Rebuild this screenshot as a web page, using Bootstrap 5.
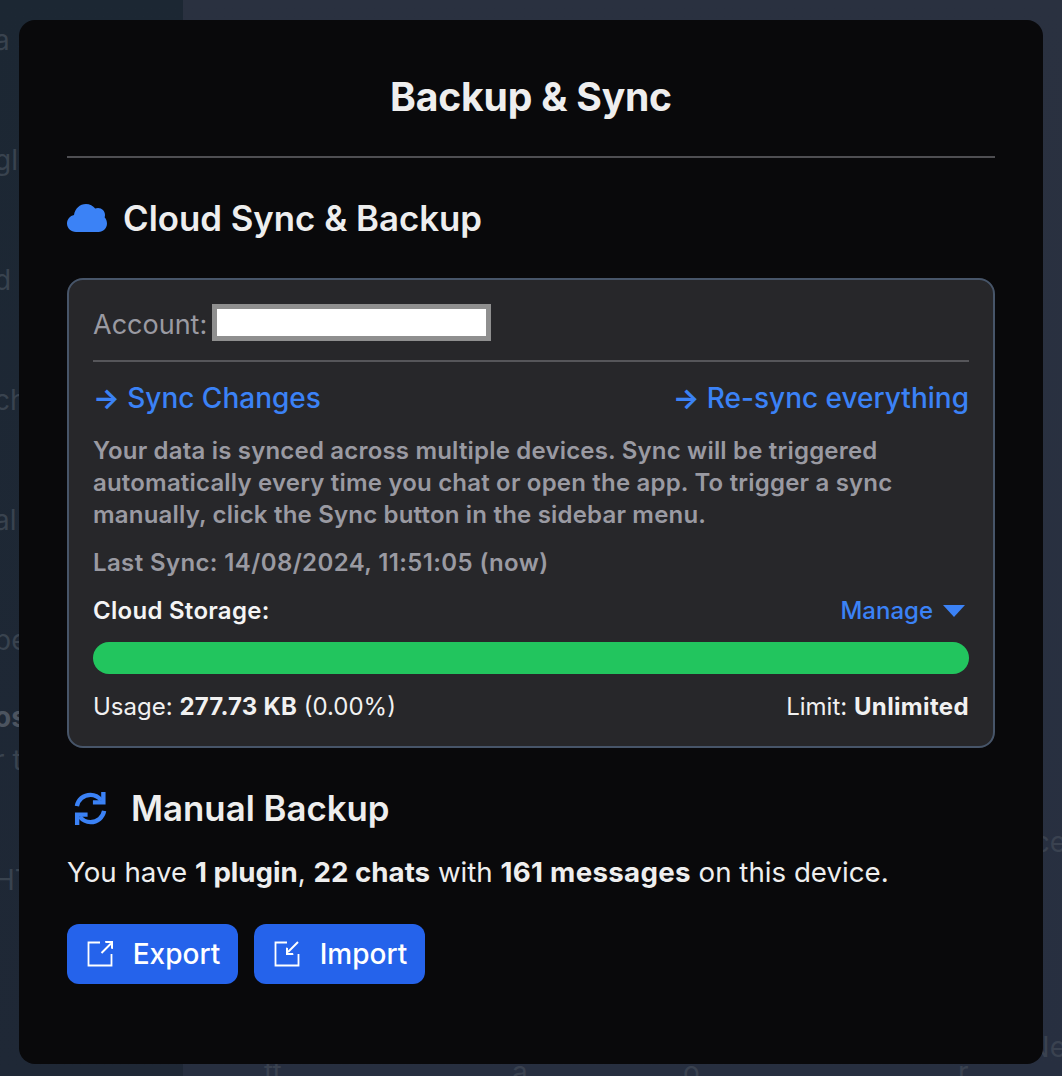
<!DOCTYPE html>
<html lang="en">
<head>
<meta charset="utf-8">
<title>Backup &amp; Sync</title>
<link rel="stylesheet" href="https://cdn.jsdelivr.net/npm/bootstrap@5.3.0/dist/css/bootstrap.min.css">
<style>
html,body{height:100%;margin:0;overflow:hidden}
body{font-family:Inter,"Liberation Sans",sans-serif;background:#2a3140;color:#eee}
.shell{height:1076px}
.side-pane{width:183px;background:linear-gradient(#1c2733,#1f2836);color:#39434f;font-size:28px;line-height:34px;overflow:hidden;white-space:nowrap;padding-top:23px;text-indent:-6px}
.side-pane div{height:120px}
.side-pane .tight{height:77px}
.side-pane .tighter{height:43px}
.side-pane .strong-frag{color:#4c5460;font-weight:700}
.main-pane{background:linear-gradient(#2a3140,#272f40);color:#3a4250;font-size:28px;line-height:34px;overflow:hidden}
.frag-column{padding-top:825px;gap:171px}
.frag-column span{margin-right:-4px}
.frag-row{margin-top:-9px;padding-left:81px}
.frag-row span{display:inline-block}
.frag-one{width:248px}
.frag-two{width:171px}
.frag-three{width:275px}
.dialog-box{position:absolute;left:19px;top:20px;width:1024px;height:1044px;background:#09090b;border-radius:16px;padding:48px}
.dialog-title{font-size:39.1px;line-height:56px;font-weight:700;text-align:center;margin:1px 0 0;padding-bottom:31px;color:#eee;letter-spacing:-.2px;border-bottom:2px solid #4e4e52}
.sec-head{font-size:34.8px;line-height:40px;font-weight:600;margin:0;color:#eee}
.sec-one{margin-top:40px;gap:16px}
.sync-panel{margin-top:40px;background:#27272a;border:2px solid #475569;border-radius:16px;padding:24px;height:470px}
.acct-line{font-size:27px;line-height:36px;color:#9a9aa2;height:56px}
.acct-label{padding-top:3px}
.blanked{display:inline-block;width:279px;height:37px;background:#fff;border:5px solid #8f8f8f;margin-left:5px}
.panel-rule{height:2px;background:#56565a}
.sync-links{margin-top:18px;font-size:28px;line-height:36px;font-weight:500}
.sync-links a,.manage-link{color:#3b82f6;text-decoration:none}
.arrow-mark{font-weight:700}
.note-text{margin:19px 0 0;font-size:24px;line-height:32px;font-weight:600;color:#9a9aa2;letter-spacing:.19px}
.last-line{margin:16px 0 0;font-size:24px;line-height:32px;font-weight:600;color:#9a9aa2;letter-spacing:.38px}
.storage-line{margin-top:16px;font-size:24px;line-height:32px;font-weight:600;color:#f4f4f5}
.store-label{letter-spacing:.28px}
.manage-link{font-weight:500;padding-right:4px}
.manage-link svg{margin-left:10px;vertical-align:2px}
.bar-track{height:32px;margin-top:15px;background:#22c55e;border-radius:16px}
.usage-line{margin-top:17px;font-size:24px;line-height:32px;color:#f1f1f1}
.usage-line b{font-weight:700;letter-spacing:.2px}
.usage-line .limit-val{letter-spacing:.35px}
.sec-two{margin-top:40px;gap:24px;padding-left:7px}
.count-line{margin:26px 0 0;font-size:27.7px;line-height:36px;color:#eee}
.count-line b{font-weight:700}
.count-line .msg-count{letter-spacing:.3px}
.act-row{margin-top:34px;gap:16px}
.act-btn{background:#2563eb;border:0;color:#fff;height:60px;width:171px;border-radius:12px;font-size:28px;line-height:36px;font-weight:500;gap:20px;padding:0 0 0 2px}
.act-btn:hover{background:#2563eb;color:#fff}
</style>
</head>
<body>
<div class="shell d-flex">
  <aside class="side-pane flex-shrink-0">
    <div>a s</div><div>gl</div><div>d s</div><div>ch</div><div>al</div>
    <div class="tight">pe</div><div class="tighter strong-frag">os</div><div>r t</div><div>HT</div>
  </aside>
  <main class="main-pane flex-grow-1">
    <div class="frag-column d-flex flex-column align-items-end">
      <span>ce</span>
      <span>Ne</span>
    </div>
    <div class="frag-row"><span class="frag-one">tt</span><span class="frag-two">a</span><span class="frag-three">o</span><span>r</span></div>
  </main>
</div>

<section class="dialog-box">
  <h1 class="dialog-title">Backup &amp; Sync</h1>

  <div class="sec-one d-flex align-items-center">
    <svg width="40" height="28" viewBox="0 0 40 28" aria-hidden="true"><path fill="#3b82f6" d="M9 28C4 28 0 24.200 0 19.500 0 15.300 3 11.800 7 11 7.800 4.800 12.800 0 19 0c3.800 0 7.100 1.800 9.200 4.600C28.900 4.200 29.900 4 31 4c3.900 0 7 3.100 7 7 0 .8-.1 1.500-.4 2.200C39 14.700 40 16.900 40 19.500 40 24.200 36.300 28 31.500 28Z"/></svg>
    <h2 class="sec-head">Cloud Sync &amp; Backup</h2>
  </div>

  <div class="sync-panel">
    <div class="acct-line d-flex align-items-start"><span class="acct-label">Account:</span><span class="blanked"></span></div>
    <div class="panel-rule"></div>
    <div class="sync-links d-flex justify-content-between">
      <a href="#"><span class="arrow-mark">→</span> Sync Changes</a>
      <a href="#"><span class="arrow-mark">→</span> Re-sync everything</a>
    </div>
    <p class="note-text">Your data is synced across multiple devices. Sync will be triggered automatically every time you chat or open the app. To trigger a sync manually, click the Sync button in the sidebar menu.</p>
    <p class="last-line">Last Sync: 14/08/2024, 11:51:05 (now)</p>
    <div class="storage-line d-flex justify-content-between">
      <span class="store-label">Cloud Storage:</span>
      <a class="manage-link" href="#">Manage<svg width="22" height="12" viewBox="0 0 22 12" aria-hidden="true"><path fill="#3b82f6" d="M0 0h22L11 12Z"/></svg></a>
    </div>
    <div class="bar-track"></div>
    <div class="usage-line d-flex justify-content-between">
      <span>Usage: <b>277.73 KB</b> (0.00%)</span>
      <span>Limit: <b class="limit-val">Unlimited</b></span>
    </div>
  </div>

  <div class="sec-two d-flex align-items-center">
    <svg width="33" height="33" viewBox="0 0 34 34" fill="none" aria-hidden="true"><path stroke="#3b82f6" stroke-width="4.500" d="M3 14.500C4.200 7.800 9.800 3 17 3c4.600 0 8.200 2 11 5.500"/><path fill="#3b82f6" d="M32.500 0v13h-13v-4.500h8.500V0Z"/><path stroke="#3b82f6" stroke-width="4.500" d="M31 19.500C29.800 26.200 24.200 31 17 31c-4.600 0-8.200-2-11-5.500"/><path fill="#3b82f6" d="M1 34V21h13v4.500H5.500V34Z"/></svg>
    <h2 class="sec-head">Manual Backup</h2>
  </div>

  <p class="count-line">You have <b>1 plugin</b>, <b>22 chats</b> with <b class="msg-count">161 messages</b> on this device.</p>

  <div class="act-row d-flex">
    <button class="btn act-btn d-flex align-items-center justify-content-center" type="button">
      <svg width="26" height="26" viewBox="0 0 26 26" fill="none" stroke="#fff" stroke-width="1.800" aria-hidden="true"><path d="M13 1.500H1.500v23h23V13"/><path stroke-width="2" d="M14.500 12 24 2.500"/><path fill="#fff" stroke="none" d="M18 0h8v8l-2-.5V2h-5.500Z"/></svg>
      <span>Export</span>
    </button>
    <button class="btn act-btn d-flex align-items-center justify-content-center" type="button">
      <svg width="26" height="26" viewBox="0 0 26 26" fill="none" stroke="#fff" stroke-width="1.800" aria-hidden="true"><path d="M13 1.500H1.500v23h23V13"/><path stroke-width="2" d="M24 1 14 11"/><path fill="#fff" stroke="none" d="M12 6.500l2 .5V12h5l.5 2H12Z"/></svg>
      <span>Import</span>
    </button>
  </div>
</section>
<script src="https://cdn.jsdelivr.net/npm/bootstrap@5.3.0/dist/js/bootstrap.bundle.min.js"></script>
</body>
</html>
